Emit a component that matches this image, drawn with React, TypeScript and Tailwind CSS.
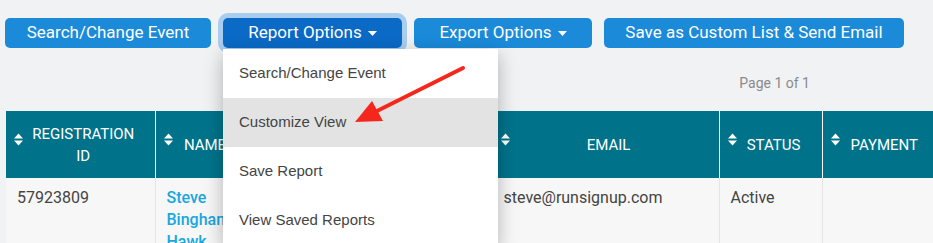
import { ReactNode } from "react";

const roboto = { fontFamily: "Roboto, 'Liberation Sans', sans-serif" };
const arial = { fontFamily: "'Liberation Sans', Arial, sans-serif" };

function Caret() {
    return (
        <svg width="9" height="5" viewBox="0 0 9 5" className="ml-[6px] mt-[1px]">
            <path d="M0 0 L9 0 L4.5 5 Z" fill="white" />
        </svg>
    );
}

function SortIcon() {
    return (
        <svg width="9" height="13" viewBox="0 0 9 13" className="absolute left-[8px] top-[22px]">
            <path d="M0 5.5 L4.5 0.5 L9 5.5 Z" fill="white" />
            <path d="M0 7.5 L9 7.5 L4.5 12.5 Z" fill="white" />
        </svg>
    );
}

function Th({ children, w, pl = 22, pr = 16, last }: { children?: ReactNode; w: number; pl?: number; pr?: number; last?: boolean }) {
    return (
        <th
            style={{ width: w, paddingLeft: pl, paddingRight: pr }}
            className={`relative h-[67px] text-center align-middle text-[15px] font-normal uppercase leading-[22px] text-white ${last ? "" : "border-r border-white"}`}
        >
            <SortIcon />
            {children}
        </th>
    );
}

export default function App() {
    const menu = ["Search/Change Event", "Customize View", "Save Report", "View Saved Reports"];

    return (
        <div className="relative h-[243px] w-[933px] overflow-hidden bg-[#f1f2f4]" style={roboto}>
            {/* toolbar */}
            <div className="flex gap-[12px] pl-[5px] pt-[18px]">
                <button className="flex h-[30px] w-[206px] items-center justify-center rounded-[5px] bg-[#1a8ad9] text-[17px] text-white">
                    Search/Change Event
                </button>
                <button className="flex h-[30px] w-[179px] items-center justify-center rounded-[5px] bg-[#0a6ac6] text-[17px] text-white ring-[5px] ring-[#a9cdef]">
                    Report Options <Caret />
                </button>
                <button className="flex h-[30px] w-[178px] items-center justify-center rounded-[5px] bg-[#1a8ad9] text-[17px] text-white">
                    Export Options <Caret />
                </button>
                <button className="flex h-[30px] w-[300px] items-center justify-center rounded-[5px] bg-[#1a8ad9] text-[17px] text-white">
                    Save as Custom List &amp; Send Email
                </button>
            </div>

            {/* pager */}
            <div className="flex h-[63px] justify-end pr-[123px] pt-[25px] text-[14px] leading-[20px] text-[#8a8a8a]">
                Page 1 of 1
            </div>

            {/* table */}
            <table className="ml-[6px] table-fixed border-collapse" style={{ width: 940 }}>
                <thead className="bg-[#00738b]">
                    <tr>
                        <Th w={149} pl={26} pr={20}>Registration ID</Th>
                        <Th w={94}>Name</Th>
                        <Th w={243}>Gender</Th>
                        <Th w={227}>Email</Th>
                        <Th w={103}>Status</Th>
                        <Th w={124} pr={22} last>Payment</Th>
                    </tr>
                </thead>
                <tbody className="bg-[#f7f7f7] text-[16px] leading-[22px] text-[#444]">
                    <tr>
                        <td className="h-[80px] border-r border-[#e4e4e4] px-[11px] pt-[9px] align-top">57923809</td>
                        <td className="border-r border-[#e4e4e4] px-[11px] pt-[9px] align-top font-medium text-[#1aa6df]">
                            Steve Bingham Hawk
                        </td>
                        <td className="border-r border-[#e4e4e4] px-[11px] pt-[9px] align-top">M</td>
                        <td className="border-r border-[#e4e4e4] px-[11px] pt-[9px] align-top">steve@runsignup.com</td>
                        <td className="border-r border-[#e4e4e4] px-[11px] pt-[9px] align-top">Active</td>
                        <td className="px-[11px] pt-[9px] align-top"></td>
                    </tr>
                </tbody>
            </table>

            {/* dropdown menu */}
            <div
                className="absolute left-[223px] top-[49px] w-[275px] bg-white shadow-[0_6px_18px_rgba(0,0,0,0.28)]"
                style={arial}
            >
                {menu.map((m) => (
                    <div
                        key={m}
                        className={`flex h-[49px] items-center px-[16px] text-[15px] text-[#444] ${m === "Customize View" ? "bg-[#e3e3e3]" : ""}`}
                    >
                        {m}
                    </div>
                ))}
            </div>

            {/* annotation arrow */}
            <svg className="pointer-events-none absolute left-0 top-0" width="933" height="243">
                <line x1="463" y1="68" x2="375" y2="112" stroke="#f5271d" strokeWidth="4" strokeLinecap="round" />
                <polygon points="355,122 372,101 383,121" fill="#f5271d" />
            </svg>
        </div>
    );
}
